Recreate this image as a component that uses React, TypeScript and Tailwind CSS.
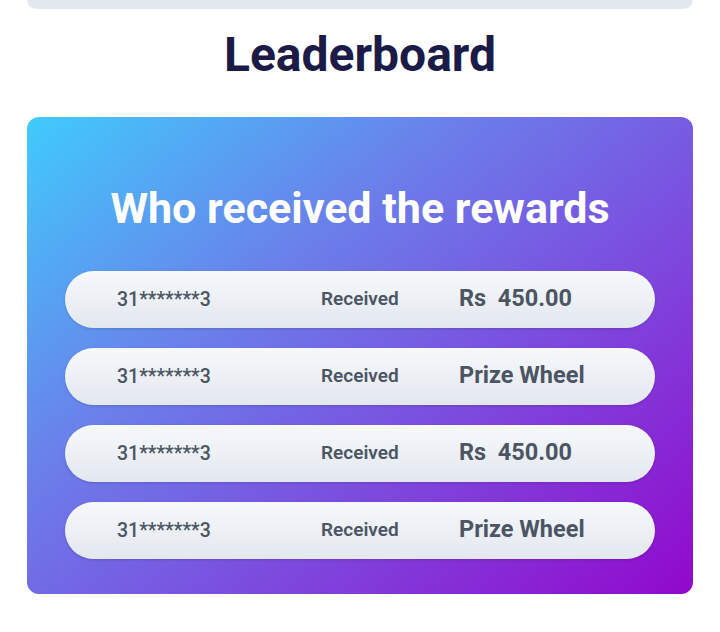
import React from "react";

const rows = [
  { id: "31*******3", prize: "Rs  450.00" },
  { id: "31*******3", prize: "Prize Wheel" },
  { id: "31*******3", prize: "Rs  450.00" },
  { id: "31*******3", prize: "Prize Wheel" },
];

export default function App() {
  return (
    <div className="w-[720px] h-[632px] bg-white px-[27px] font-['Roboto',sans-serif] overflow-hidden">
      <div className="h-[9px] rounded-b-[10px] bg-[#e2e8f0]" />
      <h1 className="mt-[22px] text-center text-[48px] leading-none font-bold text-[#1c1b48] whitespace-pre">Leaderboard</h1>
      <div className="mt-[38px] rounded-[12px] bg-[linear-gradient(140deg,#40cbfc_0%,#6b7fea_35%,#7a52e0_60%,#9208cc_100%)] px-[38px] pt-[70px] pb-[35px]">
        <h2 className="text-center text-[43px] leading-none font-bold text-white">Who received the rewards</h2>
        <div className="mt-[41px] flex flex-col gap-[20px]">
          {rows.map((r, i) => (
            <div
              key={i}
              className="h-[57px] rounded-full bg-[linear-gradient(180deg,#f6f8fb_0%,#e3e8ef_100%)] shadow-[0_1px_3px_rgba(0,0,0,0.15)] flex items-center pl-[52px] text-[#4b5563]"
            >
              <div className="w-[204px] text-[19.5px] font-medium">{r.id}</div>
              <div className="w-[138px] text-[19px] font-semibold">Received</div>
              <div className="text-[23.5px] font-bold whitespace-pre -mt-[2px]">{r.prize}</div>
            </div>
          ))}
        </div>
      </div>
    </div>
  );
}
